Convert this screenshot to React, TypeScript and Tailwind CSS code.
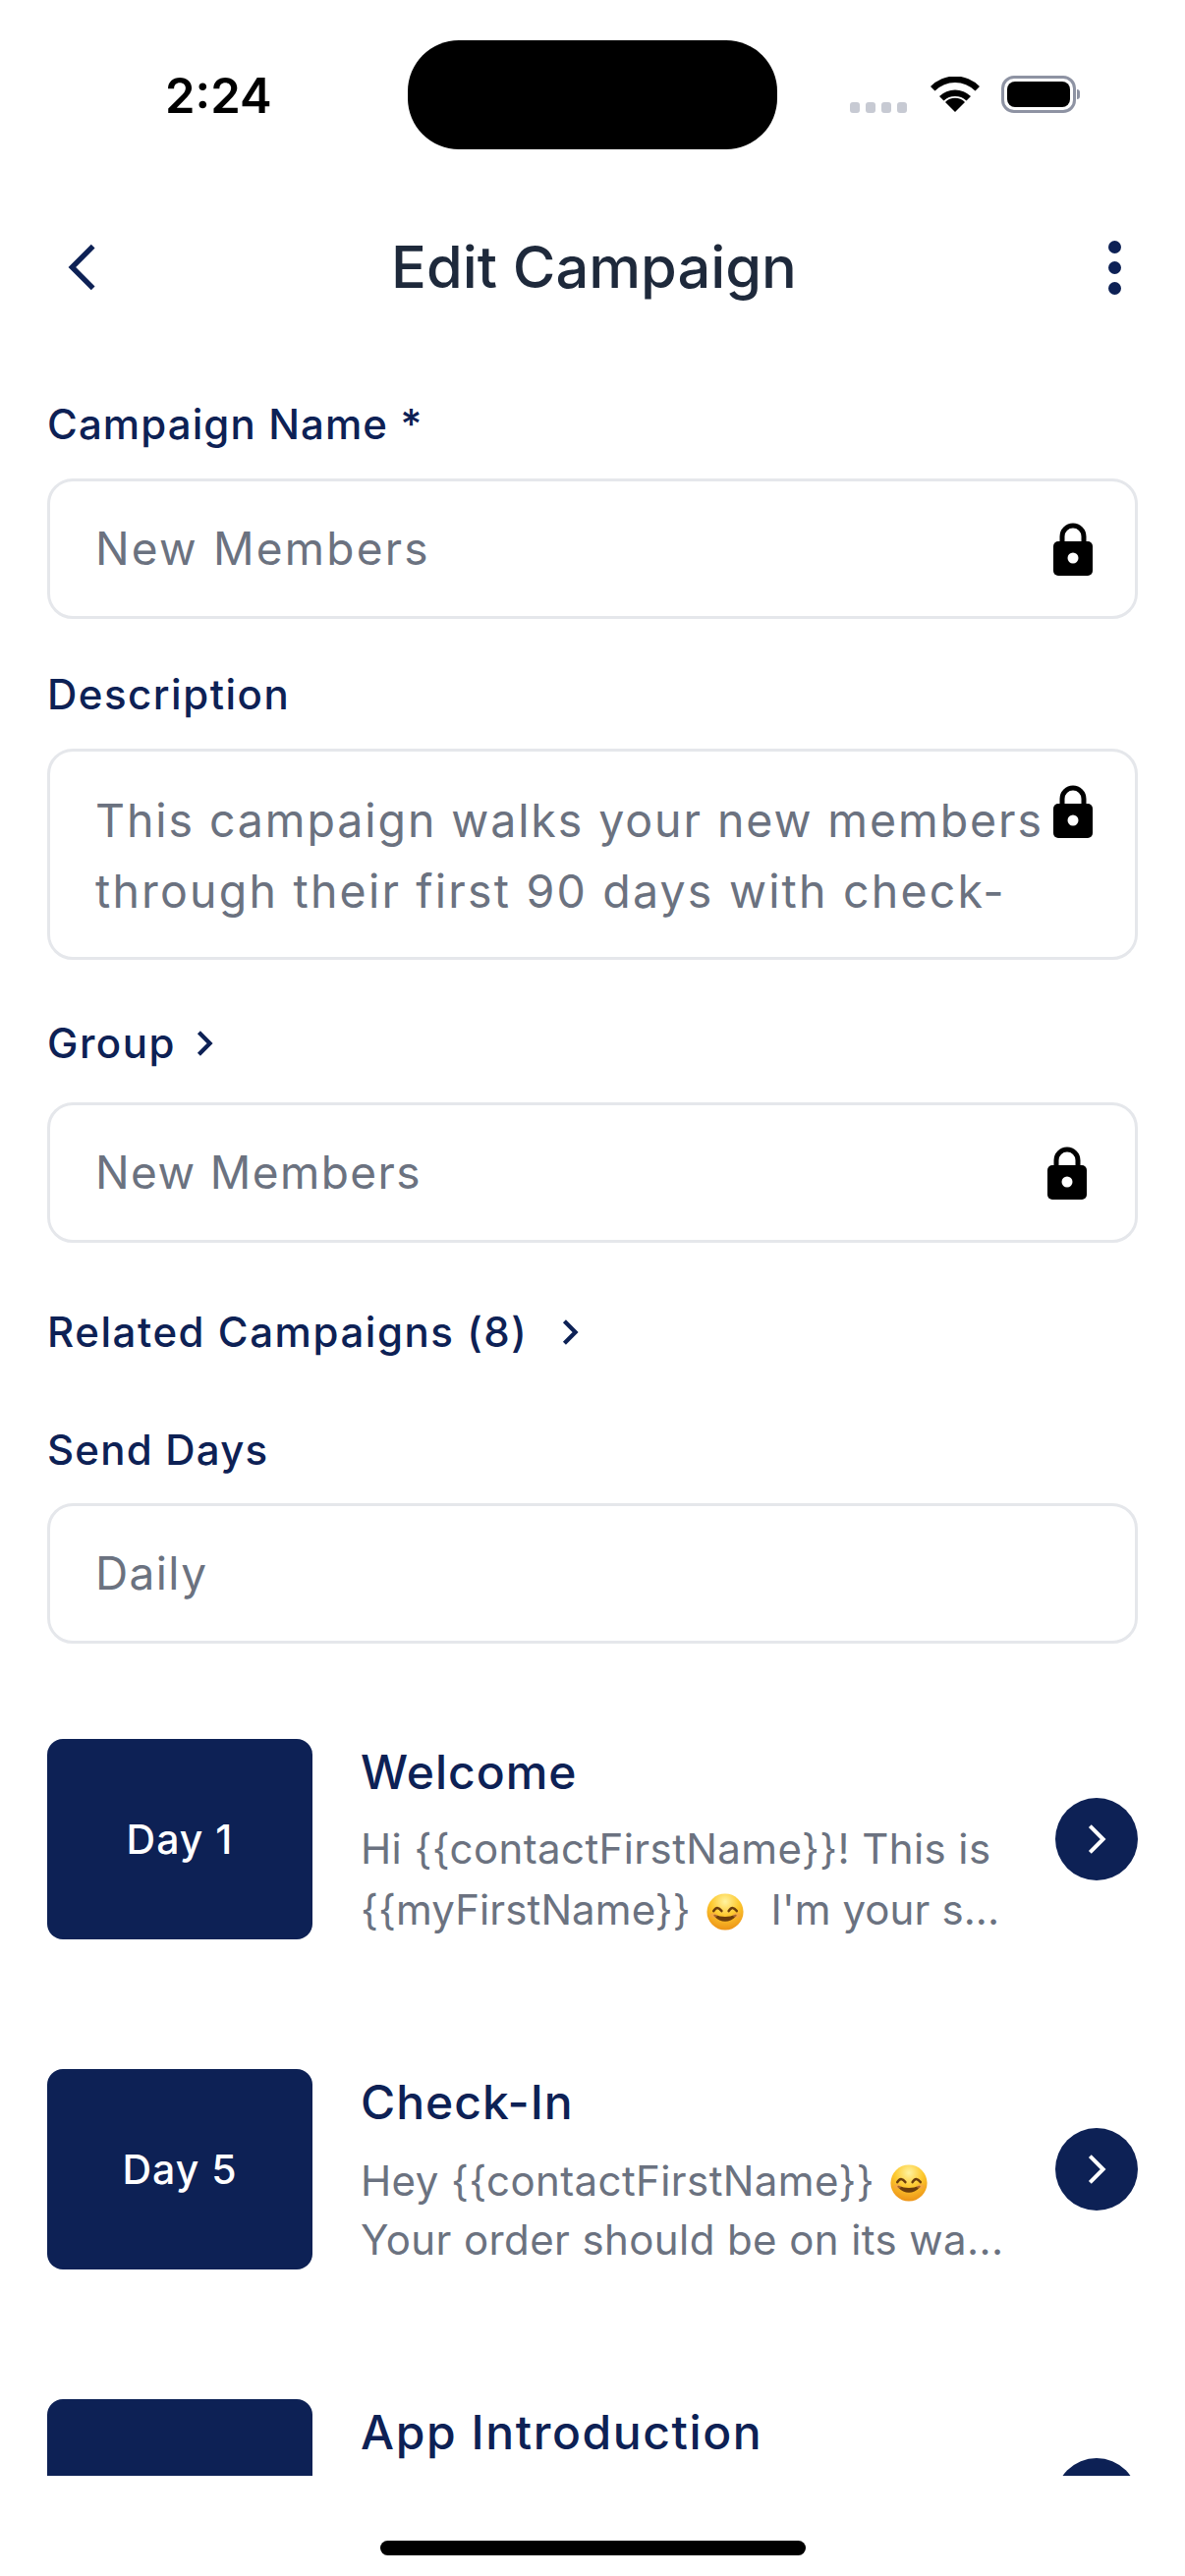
import React from "react";

const Lock = ({ className = "" }: { className?: string }) => (
  <svg className={`shrink-0 ${className}`} width="42" height="54" viewBox="0 0 42 54">
    <path d="M10 22V14a11 11 0 0 1 22 0v8" fill="none" stroke="#000" strokeWidth="5" />
    <rect x="1" y="19" width="40" height="35" rx="5" fill="#000" />
    <circle cx="21" cy="36" r="5.5" fill="#fff" />
  </svg>
);

const Chevron = ({ className = "", color = "#0d2155", w = 3.5, left = false }: { className?: string; color?: string; w?: number; left?: boolean }) => (
  <svg className={`shrink-0 ${className}`} viewBox="0 0 18 28" fill="none">
    <path d={left ? "M15 2L3 14l12 12" : "M3 2l12 12L3 26"} stroke={color} strokeWidth={w} strokeLinejoin="miter" />
  </svg>
);

const Smile = ({ id }: { id: string }) => (
  <svg className="inline-block align-[-6px] ml-[4px] mr-[4px]" width="38" height="38" viewBox="0 0 42 42">
    <defs>
      <radialGradient id={id} cx="50%" cy="22%" r="85%">
        <stop offset="0%" stopColor="#fff3a0" />
        <stop offset="45%" stopColor="#fdc92f" />
        <stop offset="100%" stopColor="#ea8a12" />
      </radialGradient>
    </defs>
    <circle cx="21" cy="21" r="20.5" fill={`url(#${id})`} />
    <path d="M8 20q4-7 9 0M25 20q4-7 9 0" fill="none" stroke="#6b3d0c" strokeWidth="2.8" strokeLinecap="round" />
    <path d="M9 25q12 12 24 0q-12 5-24 0z" fill="#6b3d0c" stroke="#6b3d0c" strokeWidth="1.8" strokeLinejoin="round" />
    <ellipse cx="8" cy="25" rx="4" ry="2.5" fill="#f59a5a" opacity="0.45" />
    <ellipse cx="34" cy="25" rx="4" ry="2.5" fill="#f59a5a" opacity="0.45" />
  </svg>
);

const Label = ({ children, className = "" }: { children: React.ReactNode; className?: string }) => (
  <div className={`h-[52px] shrink-0 flex items-center text-[42px] font-[550] text-[#0d2155] leading-none ${className}`}>{children}</div>
);

const Field = ({ text, lock, className = "" }: { text: string; lock?: React.ReactNode; className?: string }) => (
  <div className={`h-[143px] shrink-0 rounded-[26px] border-[3px] border-[#e5e7eb] flex items-center justify-between pl-[46px] text-[#6b7280] text-[46px] ${className}`}>
    <span>{text}</span>
    {lock}
  </div>
);

const CampaignRow = ({ day, title, titleClass = "tracking-[1px]", l1, l2, l2Class = "", className = "" }: { day?: string; title: string; titleClass?: string; l1?: React.ReactNode; l2?: React.ReactNode; l2Class?: string; className?: string }) => (
  <div className={`flex items-stretch h-[204px] shrink-0 ${className}`}>
    <div className="w-[270px] rounded-[16px] bg-[#0d2155] flex items-center justify-center text-white text-[41px] font-medium tracking-[1px] pt-[2px]">{day}</div>
    <div className="flex-1 pl-[49px] text-[#6b7280] text-[42px] tracking-[0.4px]">
      <div className={`text-[48px] leading-[68px] h-[68px] font-[550] text-[#0d2155] ${titleClass}`}>{title}</div>
      <div className="leading-[62px] h-[62px] mt-[13px] whitespace-nowrap">{l1}</div>
      <div className={`leading-[62px] h-[62px] whitespace-nowrap ${l2Class}`}>{l2}</div>
    </div>
    <div className="self-center w-[84px] h-[84px] rounded-full bg-[#0d2155] flex items-center justify-center">
      <Chevron className="w-[20px] h-[32px]" color="#fff" w={3.6} />
    </div>
  </div>
);

export default function App() {
  return (
    <div className="w-[1206px] h-[2622px] bg-white flex flex-col overflow-hidden font-[Inter,sans-serif]">
      {/* status bar */}
      <div className="h-[198px] shrink-0">
        <div className="h-[152px] pt-[41px] flex items-start">
          <div className="w-[415px] pl-[168px] pt-[39px] text-[49px] leading-[36px] font-semibold text-black">2:24</div>
          <div className="w-[376px] h-[111px] rounded-[52px] bg-black shrink-0" />
          <div className="flex-1 flex items-center pl-[74px] pt-[36px]">
            <div className="flex gap-[6px] pt-[27px] mr-[24px]">
              <span className="w-[10px] h-[11px] rounded-[3px] bg-[#c7cad3]" />
              <span className="w-[10px] h-[11px] rounded-[3px] bg-[#c7cad3]" />
              <span className="w-[10px] h-[11px] rounded-[3px] bg-[#c7cad3]" />
              <span className="w-[10px] h-[11px] rounded-[3px] bg-[#c7cad3]" />
            </div>
            <svg width="50" height="36" viewBox="0 0 50 36" className="mr-[22px]">
              <path d="M25 36L15 26a14 14 0 0 1 20 0z" fill="#000" />
              <path d="M9 20a23 23 0 0 1 32 0l-4.5 4.5a17 17 0 0 0-23 0z" fill="#000" />
              <path d="M0 10a35 35 0 0 1 50 0l-4.5 4.5a29 29 0 0 0-41 0z" fill="#000" />
            </svg>
            <div className="w-[76px] h-[38px] rounded-[13px] border-[3px] border-[#8e93a3] p-[3px]">
              <div className="w-full h-full rounded-[8px] bg-black" />
            </div>
            <div className="w-[3px] h-[10px] rounded-r-[3px] bg-[#8e93a3] ml-[1px]" />
          </div>
        </div>
      </div>

      {/* header */}
      <div className="h-[148px] shrink-0 flex items-center justify-between pl-[68px] pr-[65px]">
        <div className="w-[100px] flex">
          <Chevron left className="w-[32px] h-[52px]" w={3} />
        </div>
        <div className="text-[59.5px] leading-none font-medium text-[#1e293b]">Edit Campaign</div>
        <div className="w-[100px] flex flex-col gap-[8px] items-end">
          <span className="w-[13px] h-[13px] rounded-full bg-[#0d2155]" />
          <span className="w-[13px] h-[13px] rounded-full bg-[#0d2155]" />
          <span className="w-[13px] h-[13px] rounded-full bg-[#0d2155]" />
        </div>
      </div>

      {/* scroll content */}
      <div className="h-[2174px] shrink-0 overflow-hidden px-[48px] flex flex-col">
        <Label className="mt-[60px] mb-[29px] tracking-[1.1px]">Campaign Name *</Label>
        <Field text="New Members" className="tracking-[2.2px] pr-[42px]" lock={<Lock />} />
        <Label className="mt-[51px] mb-[29px] tracking-[1.5px]">Description</Label>
        <div className="h-[215px] shrink-0 rounded-[26px] border-[3px] border-[#e5e7eb] relative pl-[46px] pt-[34px] text-[#6b7280] text-[46.5px] leading-[72px] tracking-[1.9px] whitespace-nowrap">
          <div>This campaign walks your new members</div>
          <div className="tracking-[2.2px]">through their first 90 days with check-</div>
          <Lock className="absolute right-[42px] top-[34px]" />
        </div>
        <Label className="mt-[59px] mb-[34px] gap-[20px] tracking-[1.5px]">Group<Chevron className="w-[18px] h-[26px]" w={4.6} /></Label>
        <Field text="New Members" className="tracking-[1.4px] pr-[48px]" lock={<Lock />} />
        <Label className="mt-[65px] gap-[34px] tracking-[1.55px]">Related Campaigns (8)<Chevron className="w-[18px] h-[26px]" w={4.6} /></Label>
        <Label className="mt-[68px] mb-[28px] tracking-[1.2px]">Send Days</Label>
        <Field text="Daily" className="tracking-[1.4px]" />
        <CampaignRow
          className="mt-[97px]"
          day="Day 1"
          title="Welcome"
          l1="Hi {{contactFirstName}}! This is"
          l2Class="tracking-[0.1px]"
          l2={<>{"{{myFirstName}}"} <Smile id="sm1" />&nbsp; I'm your s...</>}
        />
        <CampaignRow
          className="mt-[132px]"
          day="Day 5"
          title="Check-In"
          l1={<span className="relative top-[2px]">{"Hey {{contactFirstName}}"} <Smile id="sm2" /></span>}
          l2="Your order should be on its wa..."
        />
        <CampaignRow className="mt-[132px]" title="App Introduction" titleClass="tracking-[1.6px]" />
      </div>

      {/* home indicator */}
      <div className="flex-1 flex justify-center pt-[66px]">
        <div className="w-[433px] h-[15px] rounded-full bg-black" />
      </div>
    </div>
  );
}
